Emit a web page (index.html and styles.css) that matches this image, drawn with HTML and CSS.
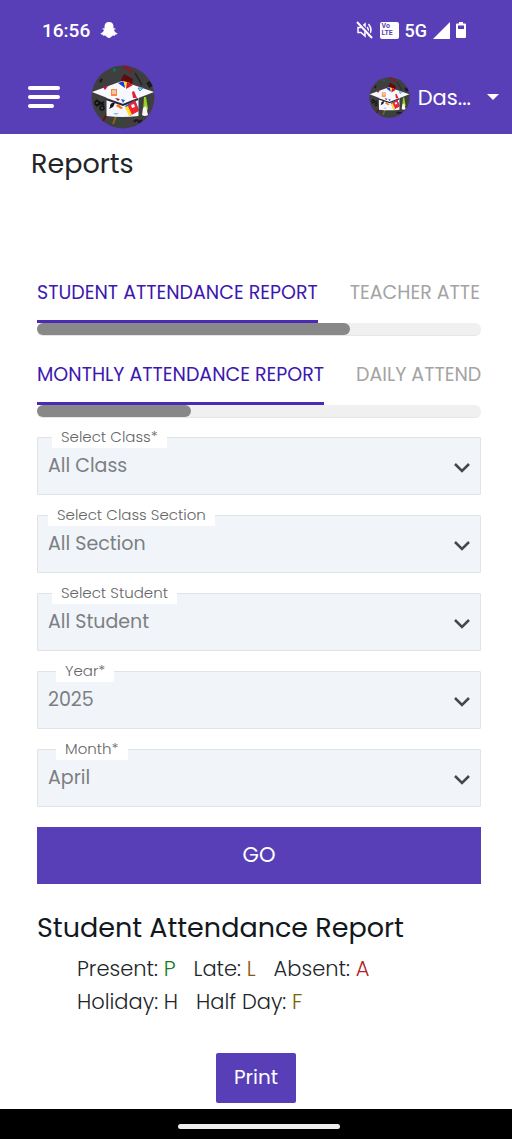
FILE: index.html
```html
<!DOCTYPE html>
<html lang="en">
<head>
<meta charset="utf-8">
<meta name="viewport" content="width=device-width, initial-scale=1">
<title>Reports</title>
<link rel="stylesheet" href="styles.css">
</head>
<body>
<svg class="defs" aria-hidden="true">
  <symbol id="crest" viewBox="0 0 64 64">
    <circle cx="32" cy="32" r="31.500" fill="#3f3f40"/>
    <g fill="none" stroke-width="1.500">
      <path d="M33 1l8 6" stroke="#8d1626" stroke-width="2.500"/>
      <path d="M44 8l7 12" stroke="#252527"/>
      <path d="M57 17l3 5M9 15l2 1" stroke="#191a1c" stroke-width="4"/>
      <path d="M22 5h3" stroke="#087454" stroke-width="3"/>
      <path d="M19 43l-7 13" stroke="#67140f" stroke-width="2"/>
      <path d="M25 51l-3 8" stroke="#8b641d" stroke-width="2"/>
      <path d="M27 54l3 4" stroke="#145c2b" stroke-width="2"/>
      <path d="M5 35l8 5M5 41l8-4" stroke="#111"/>
      <circle cx="6" cy="38" r="2" stroke="#111"/><circle cx="11" cy="43" r="2" stroke="#111"/>
      <path d="M43 57q3-4 5 0l3-2" stroke="#1b1720" stroke-width="2"/>
    </g>
    <path d="M33 9l9 5-1 8-12-5z" fill="#600b10"/>
    <path d="M15.500 31h32v20q-16 2-32 0z" fill="#f5f7fb"/>
    <path d="M1 27l30-11 32 11-31 12z" fill="#f8f9fc"/>
    <path d="M15 34l17 6 15-6" fill="none" stroke="#252838" stroke-width="2"/>
    <path d="M27 18l6-2 1 7z" fill="#1639d9"/><path d="M32 16l7 2-4 5z" fill="#ffe123"/><path d="M36 17l6 3-7 4z" fill="#d9152a"/>
    <path d="M12 22l5-1-3 4z" fill="#c51235"/>
    <path d="M20 24h6v7h-6z" fill="#f08a46"/><path d="M21 26h4m-4 2h4" stroke="#fff"/>
    <path d="M47 23h5l-3 3z" fill="#b5d8fc" stroke="#3e8bd8"/>
    <path d="M41 27l2-1 3 7h-4z" fill="#e51d35"/>
    <path d="M24 33l5 1-2 2z" fill="#8d1752"/><path d="M30 34l4 1-2 3z" fill="#2167d0"/>
    <path d="M19 42q0-5 5-4l-2 4-4 2z" fill="#17171b"/>
    <path d="M25 41l2-2 5 4-2 1z" fill="#ef7028"/>
    <path d="M22 48h6l-3 2z" fill="#83bbec"/>
    <path d="M34 41l10-6 4 10-9 6z" fill="#1d54d0"/><path d="M36 41l8-6 4 11-8 4z" fill="#ee2432"/><path d="M34 42l3-1 4 9-3 1z" fill="#ffdd25"/><path d="M40 40l3-1 1 3-3 1z" fill="#fff"/>
    <path d="M53 32h2l2 12-2 3h-3z" fill="#93d421"/><path d="M52 43l3-2 2 9q-3 2-6 0z" fill="#f6f7f2"/>
  </symbol>
  <symbol id="chevron" viewBox="0 0 18 12"><path d="M2 2l7 7 7-7" fill="none" stroke="#474747" stroke-width="2.500"/></symbol>
</svg>

<header class="header">
  <div class="status">
    <time class="clock">16:56</time>
    <svg class="ghost" viewBox="0 0 18 18" fill="#fff"><path d="M9 1c3 0 4.500 2 4.500 4.500v2l1.500-.3c1 .4.600 1-1 1.600.4 2 1.500 3 3.400 3.600.3.600-.8 1-2 1.200l-.4 1.100-2-.1C11.500 15.500 10.500 17 9 17s-2.500-1.500-4-2.400l-2 .1-.4-1.100c-1.200-.2-2.300-.6-2-1.200C2.500 11.800 3.600 10.800 4 8.800c-1.600-.6-2-1.200-1-1.600l1.500.3v-2C4.500 3 6 1 9 1z"/></svg>
    <div class="signals">
      <svg width="18" height="18" viewBox="0 0 18 18" fill="none" stroke="#fff" stroke-width="1.500"><path d="M2 6.500h3L9 3v12l-4-3.500H2zM11 6q2.500 3 0 6M12.500 3q5 6 0 12"/><path d="M2 1l15 16" stroke="#583fb8" stroke-width="3"/><path d="M1 1l15 16" stroke-width="2"/></svg>
      <span class="volte"><span>Vo</span><span>LTE</span></span>
      <span class="network">5G</span>
      <svg width="17" height="17" viewBox="0 0 17 17"><path d="M17 0v17H0z" fill="#fff"/></svg>
      <svg class="battery" width="10" height="16" viewBox="0 0 10 16"><path d="M3 0h4v1.500h2q1 0 1 1V15q0 1-1 1H1q-1 0-1-1V2.500q0-1 1-1h2z" fill="#fff"/><path d="M2 3.500h6V7H2z" fill="#583fb8"/></svg>
    </div>
  </div>
  <div class="toolbar">
    <button class="menu" type="button" aria-label="Open menu"><svg width="32" height="24" viewBox="0 0 32 24" stroke="#fff" stroke-width="4" stroke-linecap="round"><path d="M2 3h28M2 12h28M2 21h22"/></svg></button>
    <a class="brand" href="#" aria-label="Home"><svg width="64" height="64"><use href="#crest"/></svg></a>
    <button class="account" type="button"><svg width="41" height="41"><use href="#crest"/></svg><span>Das...</span><svg class="caret" width="12" height="6" viewBox="0 0 12 6"><path d="M0 0h12L6 6z" fill="#fff"/></svg></button>
  </div>
</header>

<main class="page">
  <h1 class="title">Reports</h1>
  <div class="content">
    <nav class="tabs" aria-label="Report">
      <div class="tab-list"><a class="tab tab-active" href="#">STUDENT ATTENDANCE REPORT</a><a class="tab" href="#">TEACHER ATTENDANCE REPORT</a></div>
      <div class="track"><div class="thumb thumb-report"></div></div>
    </nav>
    <nav class="tabs" aria-label="Period">
      <div class="tab-list"><a class="tab tab-active" href="#">MONTHLY ATTENDANCE REPORT</a><a class="tab" href="#">DAILY ATTENDANCE REPORT</a></div>
      <div class="track"><div class="thumb thumb-period"></div></div>
    </nav>
    <form class="filters">
      <div class="field"><label for="class">Select Class*</label><select id="class"><option>All Class</option></select><svg class="chevron"><use href="#chevron"/></svg></div>
      <div class="field field-long"><label for="section">Select Class Section</label><select id="section"><option>All Section</option></select><svg class="chevron"><use href="#chevron"/></svg></div>
      <div class="field"><label for="student">Select Student</label><select id="student"><option>All Student</option></select><svg class="chevron"><use href="#chevron"/></svg></div>
      <div class="field field-short"><label for="year">Year*</label><select id="year"><option>2025</option></select><svg class="chevron"><use href="#chevron"/></svg></div>
      <div class="field field-short"><label for="month">Month*</label><select id="month"><option>April</option></select><svg class="chevron"><use href="#chevron"/></svg></div>
      <button class="go" type="button">GO</button>
    </form>
    <h2 class="report-title">Student Attendance Report</h2>
    <ul class="legend">
      <li>Present: <span class="present">P</span></li>
      <li>Late: <span class="late">L</span></li>
      <li>Absent: <span class="absent">A</span></li>
      <li>Holiday: <span>H</span></li>
      <li>Half Day: <span class="half">F</span></li>
    </ul>
  </div>
  <button class="print" type="button">Print</button>
</main>
<footer class="gesture"><div class="pill"></div></footer>
</body>
</html>
```
FILE: styles.css
```css
* { box-sizing: border-box; }
body {
  margin: 0;
  min-height: 100vh;
  display: flex;
  flex-direction: column;
  background: #fff;
  color: #212529;
  font-family: Poppins, Inter, sans-serif;
  font-size: 20px;
}
button, select { font: inherit; }
button { border: 0; padding: 0; cursor: pointer; }
a { text-decoration: none; }
.defs { position: absolute; width: 0; height: 0; }

.header { background: #583fb8; color: #fff; height: 134px; }
.status {
  height: 60px;
  padding: 0 46px 0 42px;
  display: flex;
  align-items: center;
  font-family: Roboto, sans-serif;
}
.clock { font-size: 19px; font-weight: 500; }
.ghost { width: 18px; height: 18px; margin-left: 10px; }
.signals { margin-left: auto; display: flex; align-items: center; gap: 6px; }
.volte {
  width: 19px;
  height: 17px;
  padding: 1px 2px;
  display: flex;
  flex-direction: column;
  border-radius: 2px;
  background: #fff;
  color: #583fb8;
  font-size: 7px;
  font-weight: 700;
  line-height: 7px;
}
.network { font-size: 18px; font-weight: 500; }

.toolbar { height: 74px; padding: 0 13px 0 28px; display: flex; align-items: center; }
.menu, .account { background: none; color: inherit; display: flex; align-items: center; }
.brand { display: flex; margin-left: 31px; }
.account { margin-left: auto; gap: 8px; font-size: 21px; font-weight: 400; }
.caret { margin-left: 8px; }

.page { flex: 1; display: flex; flex-direction: column; }
.title { margin: 14px 31px 0; font-size: 27px; line-height: 32px; font-weight: 400; }
.content { padding: 84px 31px 0 37px; }
.tabs { margin-bottom: 10px; }
.tab-list { display: flex; gap: 32px; overflow: hidden; }
.tab {
  flex: none;
  height: 59px;
  padding-top: 15px;
  border-bottom: 3px solid transparent;
  color: #a4a4a4;
  font-size: 19px;
  line-height: 28px;
  font-weight: 400;
  white-space: nowrap;
}
.tab-active { color: #3d18b0; border-color: #4b2ab5; }
.track { height: 13px; border-radius: 6px; background: #f0f0f0; border-bottom: 1px solid #e6e6e9; }
.thumb { height: 12px; border-radius: 6px; background: #888; }
.thumb-report { width: 70.500%; }
.thumb-period { width: 34.600%; }

.filters { display: flex; flex-direction: column; gap: 20px; padding-top: 9px; }
.field { position: relative; }
.field label {
  position: absolute;
  top: -11px;
  left: 15px;
  padding: 0 9px;
  background: #fff;
  color: #666;
  font-size: 15px;
  line-height: 22px;
  font-weight: 300;
}
.field-long label { left: 11px; }
.field-short label { left: 19px; }
.field select {
  display: block;
  width: 100%;
  height: 58px;
  padding: 0 40px 2px 10px;
  appearance: none;
  border: 1px solid #dfe4e9;
  border-radius: 1px;
  background: #f1f5fa;
  color: #7c7f82;
  font-size: 19px;
}
.chevron { position: absolute; right: 10px; top: 25px; width: 18px; height: 12px; pointer-events: none; }
.go { height: 57px; padding-bottom: 2px; background: #583fb8; color: #fff; font-size: 21px; }
.report-title { margin: 26px 0 6px; font-size: 27px; line-height: 36px; font-weight: 400; color: #111820; }
.legend {
  margin: 0;
  padding: 0 40px;
  list-style: none;
  display: flex;
  flex-wrap: wrap;
  column-gap: 18px;
  font-size: 21px;
  font-weight: 300;
  line-height: 33px;
}
.present { color: #187b20; }
.late { color: #89550f; }
.absent { color: #b21f25; }
.half { color: #806000; }
.print {
  align-self: center;
  margin: 35px 0 6px;
  padding: 0 18px 2px;
  height: 50px;
  border-radius: 2px;
  background: #583fb8;
  color: #fff;
}
.gesture { height: 30px; background: #000; display: flex; justify-content: center; align-items: center; padding: 5px 0 0 6px; }
.pill { width: 32%; height: 5px; border-radius: 3px; background: #eee; }
```
